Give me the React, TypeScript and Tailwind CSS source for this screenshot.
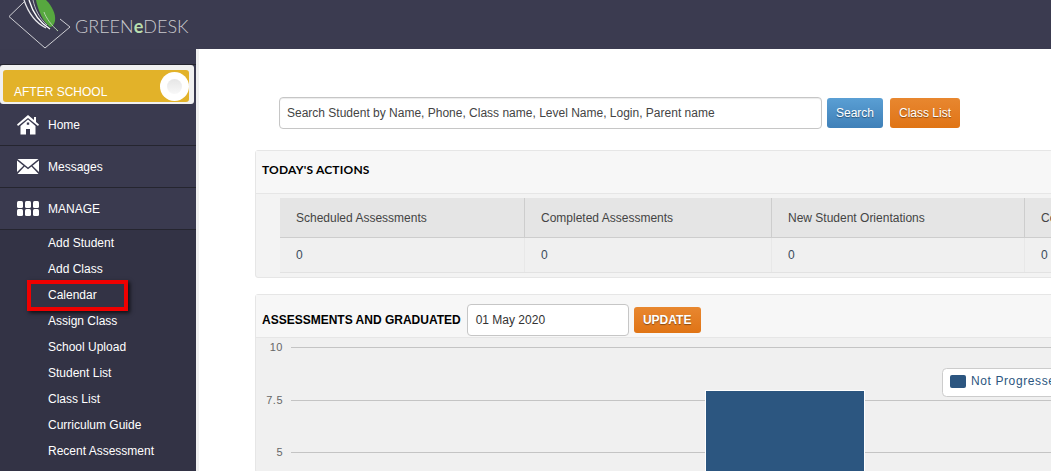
import React from "react";

const menu = ["Add Student", "Add Class", "Calendar", "Assign Class", "School Upload", "Student List", "Class List", "Curriculum Guide", "Recent Assessment"];

function Logo() {
  return (
    <svg width="70" height="50" viewBox="0 0 70 50" className="shrink-0">
      <path d="M24 2 L9 16.500 L45 48 L70 27 L60 19" fill="none" stroke="#cfcfd4" strokeWidth="1" />
      <path d="M36 0 L46 0 C52 6 56 14 55 21 C54 25 52 27 50 27 C43 22 38 10 36 0 Z" fill="#57a83f" />
      <path d="M44 12 C46 18 52 26 58 31" fill="none" stroke="#b7d3ae" strokeWidth="1" />
      <path d="M24 0 C28 12 34 22 46 28" fill="none" stroke="#e8e8ec" strokeWidth="1.300" />
      <path d="M29 0 C32 10 37 21 50 29" fill="none" stroke="#ffffff" strokeWidth="1.300" />
      <path d="M33 0 C35 9 39 18 47 25" fill="none" stroke="#d8d8dd" strokeWidth="0.800" />
    </svg>
  );
}

function HomeIcon() {
  return (
    <svg width="22" height="20" viewBox="0 0 22 20" fill="#fff">
      <path d="M11 0 L0 9.500 L1 11 L11 3 L21 11 L22 9.500 L19 7 L19 2 L17 2 L17 5 Z" />
      <path fillRule="evenodd" d="M3.500 11 L11 4.600 L18.500 11 L18.500 19.500 L13 19.500 L13 14 L9 14 L9 19.500 L3.500 19.500 Z M9.800 7.500 H12.200 V9.800 H9.800 Z" />
    </svg>
  );
}

function MailIcon() {
  return (
    <svg width="22" height="15" viewBox="0 0 22 15" fill="#fff">
      <path d="M0.500 0 H21.500 L11 8.500 Z" />
      <path d="M0 1.500 L6.500 6.800 L0 13 Z" />
      <path d="M22 1.500 L15.500 6.800 L22 13 Z" />
      <path d="M7.500 7.600 L11 10.300 L14.500 7.600 L21.500 15 H0.500 Z" />
    </svg>
  );
}

function GridIcon() {
  return (
    <div className="grid grid-cols-3 gap-x-[1.5px] gap-y-[1.5px] w-[22px]">
      {Array.from({ length: 6 }).map((_, i) => (
        <span key={i} className="h-[6.500px] bg-white rounded-[1.500px]" />
      ))}
    </div>
  );
}

function NavRow({ icon, label }: { icon: React.ReactNode; label: string }) {
  return (
    <div className="h-[42px] flex items-center border-b border-[#25252f] bg-[#3a3a4f]">
      <div className="w-[48px] pl-[17px] flex items-center shrink-0">{icon}</div>
      <span className="text-white text-[12px]">{label}</span>
    </div>
  );
}

export default function App() {
  return (
    <div className="w-[1051px] h-[471px] overflow-hidden bg-white font-['Liberation_Sans',Arial,sans-serif] text-[12px] flex flex-col">
      <header className="h-[49px] shrink-0 bg-[#3b3b50] flex items-center overflow-hidden">
        <Logo />
        <span className="text-[#c9c9cd] text-[18px] ml-[5px] mt-[3px] font-['Lato',sans-serif] font-light">
          GREEN<span className="text-[#b9dfae] font-bold">e</span>DESK
        </span>
      </header>
      <div className="flex flex-1 min-h-0">
        <aside className="w-[196px] shrink-0 bg-[#3a3a4f] flex flex-col">
          <div className="h-[16px] border-b border-[#25252f]" />
          <div className="h-[39px] bg-[#f0f0f0] rounded-[3px] mr-[2px] pl-[3px] pr-[5px] pt-[5px] pb-[2px]">
            <div className="h-full bg-[#e2b229] rounded-[3px] flex items-end justify-between pl-[11px] relative">
              <span className="text-white text-[12px] font-medium mb-[1px]">AFTER SCHOOL</span>
              <span className="w-[29px] h-[29px] rounded-full bg-white flex items-center justify-center mb-[1px]">
                <span className="w-[15px] h-[15px] rounded-full bg-gradient-to-b from-[#e6e6e6] to-[#f8f8f8]" />
              </span>
            </div>
          </div>
          <NavRow icon={<HomeIcon />} label="Home" />
          <NavRow icon={<MailIcon />} label="Messages" />
          <NavRow icon={<GridIcon />} label="MANAGE" />
          <div className="flex-1 bg-[#333345] pl-[48px]">
            {menu.map((m) => (
              <div key={m} className="h-[26px] flex items-center text-white text-[12px] relative">
                {m}
                {m === "Calendar" && (
                  <span className="absolute left-[-21px] top-[-2px] w-[101px] h-[31px] border-[4px] border-[#f00000] shadow-[2px_2px_4px_rgba(0,0,0,0.7)]" />
                )}
              </div>
            ))}
          </div>
        </aside>
        <main className="flex-1 min-w-0 bg-white border-l-[3px] border-[#f0f0f0] pl-[56px] overflow-hidden">
          <div className="flex items-center ml-[24px] mt-[48px] h-[32px]">
            <div className="w-[543px] h-[32px] shrink-0 border border-[#c6c6c6] rounded-[4px] flex items-center pl-[7px] text-[#444] shadow-[inset_0_1px_1px_rgba(0,0,0,0.08)]">
              Search Student by Name, Phone, Class name, Level Name, Login, Parent name
            </div>
            <button className="ml-[5px] w-[56px] h-[30px] rounded-[3px] bg-gradient-to-b from-[#5a9fd4] to-[#3f80b8] text-white text-[12px] [text-shadow:0_1px_1px_rgba(0,0,0,0.4)]">Search</button>
            <button className="ml-[7px] w-[70px] h-[30px] rounded-[3px] bg-gradient-to-b from-[#e8872f] to-[#e07414] text-white text-[12px] [text-shadow:0_1px_1px_rgba(0,0,0,0.4)]">Class List</button>
          </div>

          <section className="mt-[21px] w-[900px] border border-[#e6e6e6] rounded-[3px] bg-[#f3f3f3]">
            <div className="h-[43px] bg-[#f7f7f7] border-b border-[#e6e6e6] flex items-center pl-[6px] pb-[5px] font-['Lato',sans-serif] font-bold text-[12px] tracking-[0.2px] text-black">TODAY'S ACTIONS</div>
            <div className="pl-[24px] pt-[4px] pb-[4px]">
              <div className="grid grid-cols-[245px_247px_253px_200px] border-b border-[#e2e2e2]">
                {["Scheduled Assessments", "Completed Assessments", "New Student Orientations", "Completed Orientations"].map((h) => (
                  <div key={h} className="h-[40px] bg-[#e5e5e5] border-r border-b border-[#cdcdcd] flex items-center pl-[16px] text-[#444] whitespace-nowrap overflow-hidden">{h}</div>
                ))}
                {[0, 1, 2, 3].map((i) => (
                  <div key={i} className="h-[34px] bg-[#f0f0f0] border-r border-[#e8e8e8] flex items-center pl-[16px] text-[#3a4a5a]">0</div>
                ))}
              </div>
            </div>
          </section>

          <section className="mt-[16px] w-[900px] border border-[#e6e6e6] rounded-[3px] bg-[#f0f0f0]">
            <div className="h-[43px] bg-[#f7f7f7] border-b border-[#e6e6e6] flex items-center pl-[6px] pt-[8px]">
              <span className="font-bold text-[12px] text-black">ASSESSMENTS AND GRADUATED</span>
              <div className="ml-[6px] w-[162px] h-[32px] border border-[#c6c6c6] rounded-[4px] bg-white flex items-center pl-[8px] text-[#333]">01 May 2020</div>
              <button className="ml-[5px] w-[67px] h-[26px] rounded-[3px] bg-gradient-to-b from-[#e8872f] to-[#e07414] text-white font-bold text-[12px] [text-shadow:0_1px_1px_rgba(0,0,0,0.4)]">UPDATE</button>
            </div>
            <svg width="798" height="134" viewBox="0 0 798 134" className="block">
              {[[9.5, "10"], [62.5, "7.5"], [114.5, "5"]].map(([y, t]) => (
                <g key={String(t)}>
                  <line x1="35" x2="798" y1={y as number} y2={y as number} stroke="#c4c4c4" />
                  <text x="27" y={(y as number) + 3.5} textAnchor="end" fontSize="11" fill="#666" letterSpacing="0.5">{t}</text>
                </g>
              ))}
              <rect x="449.500" y="52.500" width="159" height="90" fill="#2c5680" stroke="#fff" />
              <rect x="686.500" y="30.500" width="140" height="28" rx="4" fill="#fff" stroke="#cccccc" />
              <rect x="694" y="37" width="16" height="13" rx="2" fill="#2c5680" />
              <text x="715" y="47" fontSize="12" fill="#2c5680" letterSpacing="0.6">Not Progressed</text>
            </svg>
          </section>
        </main>
      </div>
    </div>
  );
}
